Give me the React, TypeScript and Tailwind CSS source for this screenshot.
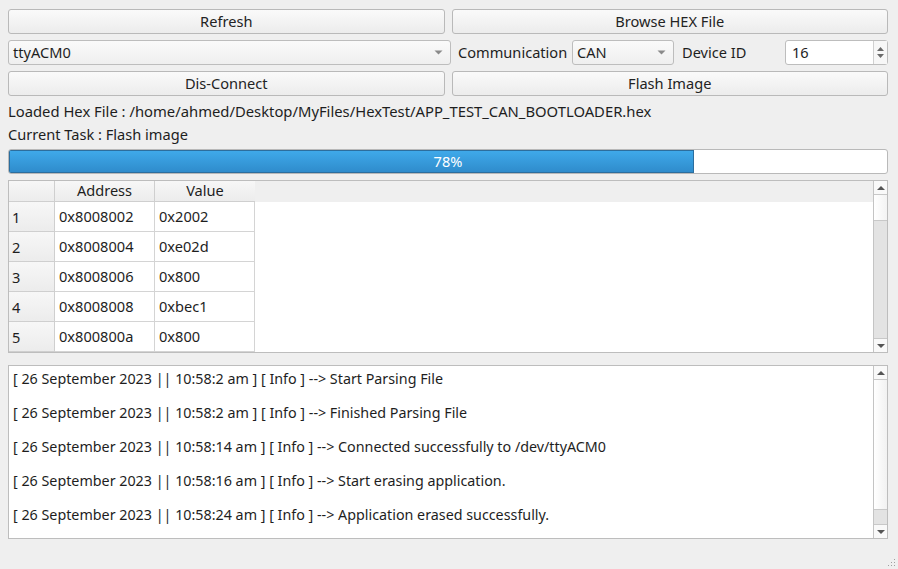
import React from "react";

const font = { fontFamily: '"Noto Sans", "Open Sans", sans-serif' };

function Button({ label }: { label: string }) {
  return (
    <button className="flex h-[25px] flex-1 items-center justify-center rounded-[3px] border border-[#b9b9b9] bg-gradient-to-b from-[#fafafa] to-[#ececec] text-[#232323]">
      {label}
    </button>
  );
}

function Arrow() {
  return (
    <svg width="9" height="5" viewBox="0 0 9 5">
      <path d="M0.5 0.5h8L4.5 4.5z" fill="#8a8a8a" />
    </svg>
  );
}

function Combo({ value, className }: { value: string; className: string }) {
  return (
    <div
      className={`flex h-[25px] items-center justify-between rounded-[3px] border border-[#bdbdbd] bg-gradient-to-b from-[#fafafa] to-[#efefef] pl-[4px] pr-[7px] text-[#1e1e1e] ${className}`}
    >
      <span>{value}</span>
      <Arrow />
    </div>
  );
}

function ScrollBar({ handle }: { handle: "top" | "bottom" }) {
  return (
    <div className="flex w-[14px] flex-col border-l border-[#c4c4c4] bg-[#f4f4f4]">
      <div className="flex h-[14px] items-center justify-center border-b border-[#c8c8c8] bg-[#f9f9f9]">
        <svg width="8" height="4" viewBox="0 0 8 4">
          <path d="M0 4L4 0L8 4z" fill="#555" />
        </svg>
      </div>
      {handle === "top" ? (
        <>
          <div className="h-[26px] border-b border-[#c8c8c8] bg-gradient-to-r from-[#ffffff] to-[#f3f3f3]" />
          <div className="flex-1 bg-[#e3e3e3]" />
        </>
      ) : (
        <>
          <div className="flex-1 bg-gradient-to-r from-[#ffffff] to-[#f1f1f1]" />
          <div className="h-[15px] border-t border-[#c8c8c8] bg-[#e3e3e3]" />
        </>
      )}
      <div className="flex h-[14px] items-center justify-center border-t border-[#c8c8c8] bg-[#f9f9f9]">
        <svg width="8" height="4" viewBox="0 0 8 4">
          <path d="M0 0L8 0L4 4z" fill="#555" />
        </svg>
      </div>
    </div>
  );
}

const rows = [
  ["0x8008002", "0x2002"],
  ["0x8008004", "0xe02d"],
  ["0x8008006", "0x800"],
  ["0x8008008", "0xbec1"],
  ["0x800800a", "0x800"],
];

const logs = [
  "[ 26 September 2023 || 10:58:2 am ] [ Info ] --> Start Parsing File",
  "[ 26 September 2023 || 10:58:2 am ] [ Info ] --> Finished Parsing File",
  "[ 26 September 2023 || 10:58:14 am ] [ Info ] --> Connected successfully to /dev/ttyACM0",
  "[ 26 September 2023 || 10:58:16 am ] [ Info ] --> Start erasing application.",
  "[ 26 September 2023 || 10:58:24 am ] [ Info ] --> Application erased successfully.",
];

export default function App() {
  const progress = 78;
  return (
    <div
      style={font}
      className="relative flex h-[569px] w-[898px] flex-col bg-[#efefef] pl-[8px] pr-[10px] pt-[9px] text-[14.6px] text-[#1e1e1e]"
    >
      <div className="flex flex-col gap-[6px]">
        <div className="flex gap-[7px]">
          <Button label="Refresh" />
          <Button label="Browse HEX File" />
        </div>
        <div className="flex gap-[7px]">
          <Combo value="ttyACM0" className="flex-1" />
          <div className="flex flex-1 items-center">
            <span className="w-[114px] shrink-0 whitespace-nowrap">Communication</span>
            <Combo value="CAN" className="w-[102px] shrink-0" />
            <span className="ml-[8px] flex-1">Device ID</span>
            <div className="flex h-[25px] w-[103px] items-center justify-between rounded-[3px] border border-[#bdbdbd] bg-white pl-[6px]">
              <span>16</span>
              <div className="flex h-full w-[14px] flex-col items-center justify-center gap-[3px] border-l border-[#d0d0d0] bg-[#f7f7f7]">
                <svg width="7" height="4" viewBox="0 0 7 4">
                  <path d="M0 4L3.5 0L7 4z" fill="#6a6a6a" />
                </svg>
                <svg width="7" height="4" viewBox="0 0 7 4">
                  <path d="M0 0L7 0L3.5 4z" fill="#6a6a6a" />
                </svg>
              </div>
            </div>
          </div>
        </div>
        <div className="flex gap-[7px]">
          <Button label="Dis-Connect" />
          <Button label="Flash Image" />
        </div>
      </div>

      <div className="mt-[4px] flex h-[23px] items-center text-[14.8px]">
        Loaded Hex File : /home/ahmed/Desktop/MyFiles/HexTest/APP_TEST_CAN_BOOTLOADER.hex
      </div>
      <div className="flex h-[23px] items-center">Current Task : Flash image</div>

      <div className="relative mt-[3px] flex h-[25px] overflow-hidden rounded-[3px] border border-[#b9b9b9] bg-white">
        <div
          style={{ width: `${progress}%` }}
          className="border border-[#2c6e9e] bg-gradient-to-b from-[#3fa9ea] to-[#2f8ccc]"
        />
        <span className="absolute inset-0 flex items-center justify-center text-white">
          {progress}%
        </span>
      </div>

      <div className="mt-[6px] flex h-[173px] border border-[#bdbdbd] bg-white">
        <div className="flex flex-1 flex-col">
          <div className="flex h-[21px] bg-[#efefef]">
            <div className="w-[46px] border-b border-r border-[#cfcfcf] bg-gradient-to-b from-[#f7f7f7] to-[#ececec]" />
            <div className="flex w-[100px] items-center justify-center border-b border-r border-[#cfcfcf] bg-gradient-to-b from-[#f7f7f7] to-[#ececec]">
              Address
            </div>
            <div className="flex w-[100px] items-center justify-center border-b border-[#cfcfcf] bg-gradient-to-b from-[#f7f7f7] to-[#ececec]">
              Value
            </div>
          </div>
          {rows.map((r, i) => (
            <div key={i} className="flex h-[30px]">
              <div className="flex w-[46px] items-center border-b border-r border-[#cfcfcf] bg-gradient-to-b from-[#f7f7f7] to-[#ececec] pl-[3px] pt-[3px]">
                {i + 1}
              </div>
              <div className="flex w-[100px] items-center border-b border-r border-[#d4d4d4] pl-[4px]">
                {r[0]}
              </div>
              <div className="flex w-[100px] items-center border-b border-r border-[#d4d4d4] pl-[4px]">
                {r[1]}
              </div>
            </div>
          ))}
        </div>
        <ScrollBar handle="top" />
      </div>

      <div className="mt-[12px] flex h-[174px] border border-[#bdbdbd] bg-white">
        <div className="flex flex-1 flex-col pl-[4px] pt-[2px] text-[14.3px]">
          {logs.map((l, i) => (
            <div key={i} className="flex h-[34px] items-start">
              <span className="leading-[22px]">{l}</span>
            </div>
          ))}
        </div>
        <ScrollBar handle="bottom" />
      </div>

      <svg className="absolute bottom-[2px] right-[2px]" width="10" height="10" viewBox="0 0 10 10">
        {[
          [8, 2],
          [5, 5],
          [8, 5],
          [2, 8],
          [5, 8],
          [8, 8],
        ].map(([x, y], i) => (
          <rect key={i} x={x} y={y} width="1" height="1" fill="#a0a0a0" />
        ))}
      </svg>
    </div>
  );
}
